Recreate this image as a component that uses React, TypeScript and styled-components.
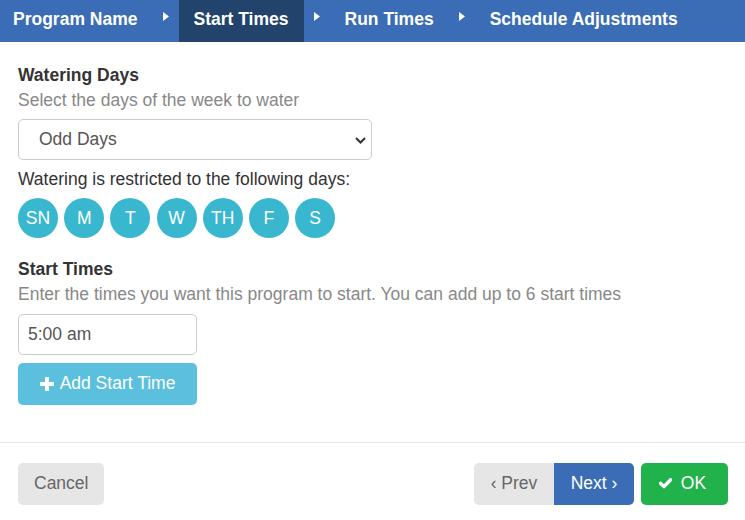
import styled, { createGlobalStyle } from "styled-components";

const GlobalStyle = createGlobalStyle`
  html, body {
    margin: 0;
    padding: 0;
    background: #fff;
  }
  body {
    font-family: "Liberation Sans", Arial, sans-serif;
    font-size: 17.5px;
    line-height: 25px;
    color: #333;
  }
  * {
    box-sizing: border-box;
  }
`;

const Page = styled.div`
  width: 745px;
  height: 520px;
  overflow: hidden;
  display: flex;
  flex-direction: column;
`;

const Steps = styled.nav`
  display: flex;
  height: 42px;
  background: #3a6db5;
`;

const Step = styled.div<{ $active?: boolean; $first?: boolean }>`
  height: 42px;
  padding: 0 15px 4px ${(p) => (p.$first ? "13px" : "15px")};
  line-height: 38px;
  font-weight: bold;
  color: #fff;
  white-space: nowrap;
  background: ${(p) => (p.$active ? "#22436c" : "transparent")};
`;

const Caret = styled.div`
  width: 26px;
  display: flex;
  justify-content: center;
  padding-top: 12px;
`;

const Body = styled.div`
  padding: 20.5px 18px 37px;
`;

const Heading = styled.div`
  font-weight: bold;
  color: #333;
`;

const Hint = styled.div`
  color: #888;
`;

const SelectWrap = styled.div`
  position: relative;
  width: 354px;
  margin-top: 6.5px;
`;

const Select = styled.select`
  appearance: none;
  width: 100%;
  height: 41px;
  border: 1px solid #ccc;
  border-radius: 5px;
  padding: 0 0 0 20px;
  background: #fff;
  font: inherit;
  color: #555;
  outline: none;
`;

const Chevron = styled.svg`
  position: absolute;
  right: 6px;
  top: 18px;
  pointer-events: none;
`;

const Note = styled.div`
  margin-top: 6.5px;
  color: #333;
`;

const Days = styled.div`
  display: flex;
  gap: 6.2px;
  margin-top: 6.5px;
`;

const Day = styled.div`
  width: 40px;
  height: 40px;
  border-radius: 50%;
  background: #39b7cf;
  color: #fff;
  display: flex;
  align-items: center;
  justify-content: center;
`;

const Section = styled.div`
  margin-top: 18.5px;
`;

const TimeInput = styled.input`
  display: block;
  margin-top: 7px;
  width: 179px;
  height: 41px;
  border: 1px solid #ccc;
  border-radius: 5px;
  padding: 0 9px;
  font: inherit;
  color: #555;
  outline: none;
`;

const AddButton = styled.button`
  margin-top: 8px;
  width: 179px;
  height: 42px;
  border: none;
  border-radius: 5px;
  background: #5bc0de;
  color: #fff;
  font: inherit;
  display: flex;
  align-items: center;
  justify-content: center;
  gap: 6px;
`;

const Footer = styled.div`
  border-top: 1px solid #e5e5e5;
  padding: 20px 17px 0 18px;
  display: flex;
  justify-content: space-between;
`;

const Group = styled.div`
  display: flex;
  gap: 7px;
`;

const Joined = styled.div`
  display: flex;
`;

const Button = styled.button<{ $tone: "plain" | "primary" | "success"; $join?: "left" | "right" }>`
  height: 42px;
  padding: 0 15px;
  border: 1px solid transparent;
  border-radius: ${(p) =>
    p.$join === "left" ? "5px 0 0 5px" : p.$join === "right" ? "0 5px 5px 0" : "5px"};
  font: inherit;
  display: flex;
  align-items: center;
  justify-content: center;
  gap: 5px;
  background: ${(p) =>
    p.$tone === "primary" ? "#3a6db5" : p.$tone === "success" ? "#22b24c" : "#e6e6e6"};
  color: ${(p) => (p.$tone === "plain" ? "#666" : "#fff")};
`;

const NavButton = styled(Button)`
  width: 80px;
  padding: 0;
`;

const OkButton = styled(Button)`
  width: 87px;
  padding: 0 4px 0 0;
  gap: 9px;
`;

const steps = ["Program Name", "Start Times", "Run Times", "Schedule Adjustments"];
const days = ["SN", "M", "T", "W", "TH", "F", "S"];

function StepCaret() {
  return (
    <Caret>
      <svg width="6" height="9" viewBox="0 0 6 9">
        <polygon points="0,0 6,4.5 0,9" fill="#fff" />
      </svg>
    </Caret>
  );
}

function PlusIcon() {
  return (
    <svg width="14" height="14" viewBox="0 0 14 14">
      <rect x="5" y="0" width="4" height="14" fill="#fff" />
      <rect x="0" y="5" width="14" height="4" fill="#fff" />
    </svg>
  );
}

function CheckIcon() {
  return (
    <svg width="13" height="11" viewBox="0 0 13 11">
      <polyline
        points="1.6,5.4 5,8.6 11.6,1.8"
        fill="none"
        stroke="#fff"
        strokeWidth="3.4"
        strokeLinecap="round"
        strokeLinejoin="round"
      />
    </svg>
  );
}

export default function App() {
  return (
    <Page>
      <GlobalStyle />
      <Steps>
        {steps.map((s, i) => (
          <div key={s} style={{ display: "contents" }}>
            {i > 0 && <StepCaret />}
            <Step $first={i === 0} $active={i === 1}>
              {s}
            </Step>
          </div>
        ))}
      </Steps>
      <Body>
        <Heading>Watering Days</Heading>
        <Hint>Select the days of the week to water</Hint>
        <SelectWrap>
          <Select defaultValue="odd">
            <option value="odd">Odd Days</option>
            <option value="even">Even Days</option>
          </Select>
          <Chevron width="11" height="7" viewBox="0 0 11 7">
            <polyline points="1,1 5.5,5.5 10,1" fill="none" stroke="#333" strokeWidth="2" />
          </Chevron>
        </SelectWrap>
        <Note>Watering is restricted to the following days:</Note>
        <Days>
          {days.map((d) => (
            <Day key={d}>{d}</Day>
          ))}
        </Days>
        <Section>
          <Heading>Start Times</Heading>
          <Hint>Enter the times you want this program to start. You can add up to 6 start times</Hint>
          <TimeInput defaultValue="5:00 am" />
          <AddButton>
            <PlusIcon />
            Add Start Time
          </AddButton>
        </Section>
      </Body>
      <Footer>
        <Button $tone="plain">Cancel</Button>
        <Group>
          <Joined>
            <NavButton $tone="plain" $join="left">‹ Prev</NavButton>
            <NavButton $tone="primary" $join="right">Next ›</NavButton>
          </Joined>
          <OkButton $tone="success">
            <CheckIcon />
            OK
          </OkButton>
        </Group>
      </Footer>
    </Page>
  );
}
